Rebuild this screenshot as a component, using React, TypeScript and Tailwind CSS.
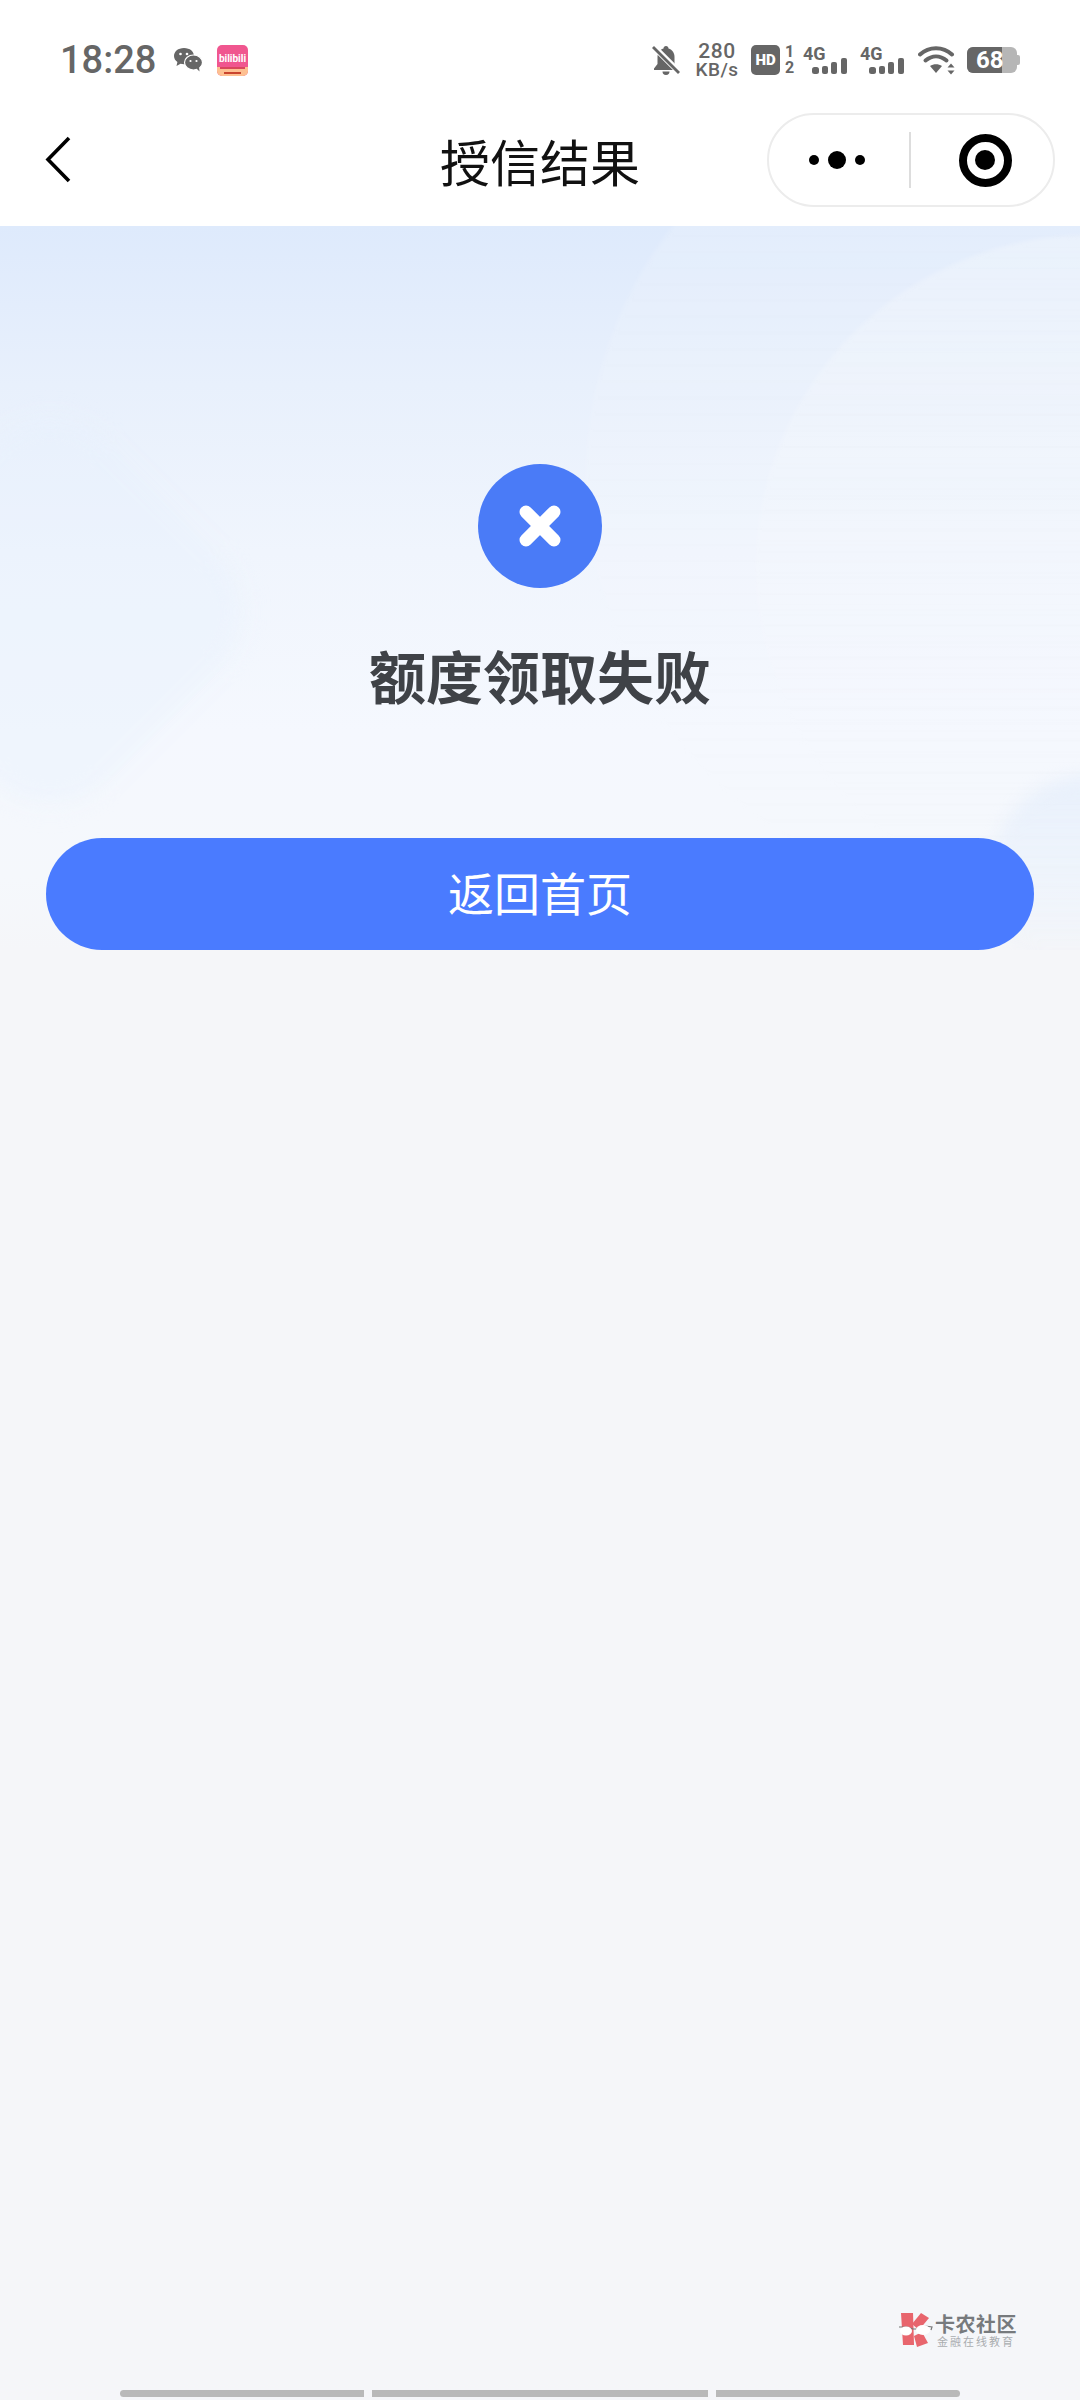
function StatusBar() {
  return (
    <div className="h-[100px] pt-[20px] pl-[60px] flex items-center text-[#666666] font-['Roboto',sans-serif]">
      <span className="text-[38px] leading-none font-medium">18:28</span>
      <svg className="ml-[17px]" width="30" height="26" viewBox="0 0 30 26">
        <path d="M11 1C5 1 1 4.600 1 9c0 2.500 1.300 4.600 3.400 6L3.500 19l4-2.200c1.100.300 2.300.400 3.500.400C17 17.200 21 13.400 21 9S17 1 11 1z" fill="#666666" />
        <circle cx="7.500" cy="7" r="1.300" fill="#ffffff" />
        <circle cx="14" cy="7" r="1.300" fill="#ffffff" />
        <ellipse cx="20.500" cy="15.500" rx="9" ry="7.500" fill="#666666" stroke="#ffffff" strokeWidth="1.200" />
        <path d="M23.500 21.500l3 3-.5-5z" fill="#666666" />
        <circle cx="17.500" cy="14" r="1.100" fill="#ffffff" />
        <circle cx="23.500" cy="14" r="1.100" fill="#ffffff" />
      </svg>
      <svg className="ml-[14px]" width="31" height="31" viewBox="0 0 31 31">
        <rect width="31" height="31" rx="5" fill="#f0568f" />
        <path d="M0 22h31v4a5 5 0 0 1-5 5H5a5 5 0 0 1-5-5z" fill="#fdc091" />
        <path d="M3 22h25v2H3z" fill="#d9475c" />
        <text x="15.500" y="17" textAnchor="middle" fontSize="10" fontWeight="700" fill="#ffffff" fontFamily="Roboto, sans-serif">bilibili</text>
        <path d="M7 27h17v2H7z" fill="#c9452f" />
      </svg>

      <div className="ml-auto pr-[60px] flex items-center">
        <svg width="28" height="30" viewBox="0 0 28 30">
          <path d="M14 1c-1.500 0-2.500 1-2.500 2.500C7.500 4.800 5.500 8 5.500 12v7L2 23.500V25h24v-1.500L22.500 19v-7c0-4-2-7.200-6-8.500C16.500 2 15.500 1 14 1z" fill="#666666" />
          <path d="M10.500 26.500h7a3.500 3.500 0 0 1-7 0z" fill="#666666" />
          <path d="M1 1l26 26" stroke="#ffffff" strokeWidth="6" />
          <path d="M1 2l26 26" stroke="#666666" strokeWidth="2.800" />
        </svg>
        <div className="ml-[14px] w-[46px] flex flex-col items-center font-medium">
          <span className="text-[21px] leading-[20px] tracking-[0.5px]">280</span>
          <span className="text-[19px] leading-[18px] tracking-[0.5px]">KB/s</span>
        </div>
        <div className="ml-[11px] w-[29px] h-[30px] rounded-[5px] bg-[#666666] flex items-center justify-center">
          <span className="text-white text-[15px] leading-none font-black">HD</span>
        </div>
        <div className="ml-[4px] w-[11px] flex flex-col items-center font-bold">
          <span className="text-[16px] leading-[16px]">1</span>
          <span className="text-[16px] leading-[16px]">2</span>
        </div>
        <Signal className="ml-[8px]" />
        <Signal className="ml-[11px]" />
        <svg className="ml-[12px]" width="38" height="30" viewBox="0 0 38 30">
          <path d="M2 9.500C11 1 25 1 34 9.500" fill="none" stroke="#666666" strokeWidth="4" strokeLinecap="round" />
          <path d="M7.500 15.500c6.500-5.500 14.500-5.500 21 0" fill="none" stroke="#666666" strokeWidth="4" strokeLinecap="round" />
          <path d="M12 21c3.500-2.500 8.500-2.500 12 0l-6 7z" fill="#666666" />
          <path d="M33 18.500l-3.500 4h7z" fill="#666666" />
          <path d="M33 29.500l-3.500-4h7z" fill="#666666" />
        </svg>
        <div className="ml-[11px] flex items-center">
          <div className="relative w-[50px] h-[26px] rounded-[6px] overflow-hidden bg-[#b6b6b6] flex">
            <div className="w-[35px] h-full bg-[#666666]" />
            <span className="absolute left-[9px] top-0 text-white text-[24px] leading-[26px] font-bold">68</span>
          </div>
          <div className="w-[3px] h-[10px] rounded-r-[2px] bg-[#b6b6b6]" />
        </div>
      </div>
    </div>
  );
}

function Signal({ className }: { className: string }) {
  return (
    <div className={"relative w-[46px] h-[30px] " + className}>
      <span className="absolute left-0 top-0 text-[18px] leading-[17px] font-bold">4G</span>
      <svg className="absolute left-[9px] bottom-0" width="36" height="18" viewBox="0 0 36 18">
        <rect x="0" y="10" width="7" height="7" rx="2.500" fill="#666666" />
        <rect x="10" y="9" width="6" height="8" rx="2" fill="#666666" />
        <rect x="19" y="5" width="6" height="12" rx="2" fill="#666666" />
        <rect x="29" y="1" width="6" height="16" rx="2" fill="#666666" />
      </svg>
    </div>
  );
}

function NavBar() {
  return (
    <div className="h-[126px] pb-[6px] grid grid-cols-[1fr_auto_1fr] items-center">
      <svg className="ml-[44px]" width="28" height="48" viewBox="0 0 28 48">
        <path d="M25 2L4 23.500 25 45" fill="none" stroke="#000000" strokeWidth="3.600" />
      </svg>
      <h1 className="text-[50px] leading-none font-normal text-[#111111]">授信结果</h1>
      <div className="justify-self-end mr-[25px] w-[288px] h-[94px] rounded-full border-2 border-[#ececec] bg-white flex items-center">
        <div className="flex-1 flex items-center justify-center gap-[9px] pr-[4px]">
          <span className="w-[10px] h-[10px] rounded-full bg-black" />
          <span className="w-[18px] h-[18px] rounded-full bg-black" />
          <span className="w-[10px] h-[10px] rounded-full bg-black" />
        </div>
        <div className="w-[2px] h-[56px] bg-[#dddddd]" />
        <div className="flex-1 flex items-center justify-center pl-[7px]">
          <div className="w-[53px] h-[53px] rounded-full border-[8px] border-black flex items-center justify-center">
            <span className="w-[20px] h-[20px] rounded-full bg-black" />
          </div>
        </div>
      </div>
    </div>
  );
}

export default function App() {
  return (
    <div className="w-[1080px] h-[2400px] flex flex-col bg-[#f5f6f9] overflow-hidden font-['Noto_Sans_CJK_SC',sans-serif]">
      <div className="bg-white">
        <StatusBar />
        <NavBar />
      </div>

      <div className="relative h-[724px] px-[46px] flex flex-col items-center overflow-hidden bg-[linear-gradient(180deg,#deeafc_0%,#e8f0fc_22%,#f0f5fd_45%,#f5f8fe_70%,#f5f8fc_90%,#f5f6f9_100%)]">
        <div className="absolute left-[585px] top-[-160px] w-[830px] h-[830px] rounded-full blur-[2px] bg-gradient-to-b from-white/20 to-white/0" />
        <div className="absolute left-[755px] top-[9px] w-[670px] h-[670px] rounded-full blur-[2px] bg-gradient-to-b from-white/25 to-white/0" />
        <div className="absolute left-[-110px] top-[226px] w-[320px] h-[320px] rotate-45 rounded-[80px] blur-[12px] bg-[#e6effc]/40" />
        <div className="absolute left-[990px] top-[550px] w-[200px] h-[200px] rounded-full blur-[8px] bg-gradient-to-b from-[#e3edfb]/70 to-[#e3edfb]/0" />

        <div className="relative mt-[238px] w-[124px] h-[124px] rounded-full bg-[#4a7bf7] flex items-center justify-center">
          <svg width="42" height="42" viewBox="0 0 42 42">
            <path d="M7 7l28 28M35 7L7 35" stroke="#ffffff" strokeWidth="13" strokeLinecap="round" />
          </svg>
        </div>
        <h2 className="relative mt-[51px] text-[57px] leading-[70px] font-bold text-[#3f4247]">额度领取失败</h2>
        <button className="relative mt-auto w-full h-[112px] pb-[5px] rounded-full bg-[#4a7bff] text-white text-[46px] font-normal">
          返回首页
        </button>
      </div>

      <div className="mt-auto self-end mr-[63px] mb-[42px] flex items-center gap-[2px]">
        <svg width="34" height="36" viewBox="0 0 34 36">
          <path d="M2 1h12l1 32-11 0z" fill="#e8656d" />
          <path d="M13 12l9-11 8 5-10 12z" fill="#e8656d" />
          <path d="M15 24l8-4 6 11-11 4z" fill="#e8656d" />
          <path d="M0 15l8 0 6 2 5 0 7-3 7 1-1 3" fill="none" stroke="#777777" strokeWidth="1.200" />
          <ellipse cx="7" cy="19" rx="6" ry="4.500" fill="#ffffff" />
          <ellipse cx="24" cy="18" rx="7" ry="5" fill="#ffffff" />
        </svg>
        <div className="flex flex-col">
          <span className="text-[20px] leading-[21px] font-bold text-[#777a7d] tracking-[0.5px]">卡农社区</span>
          <span className="text-[11px] leading-[14px] text-[#aaadb0] tracking-[2px] ml-[2px]">金融在线教育</span>
        </div>
      </div>

      <div className="mb-[3px] px-[120px] flex gap-[8px] h-[7px]">
        <div className="w-[244px] rounded-l-full bg-[#b9b9b9]" />
        <div className="w-[336px] bg-[#b9b9b9]" />
        <div className="w-[244px] rounded-r-full bg-[#b9b9b9]" />
      </div>
    </div>
  );
}
